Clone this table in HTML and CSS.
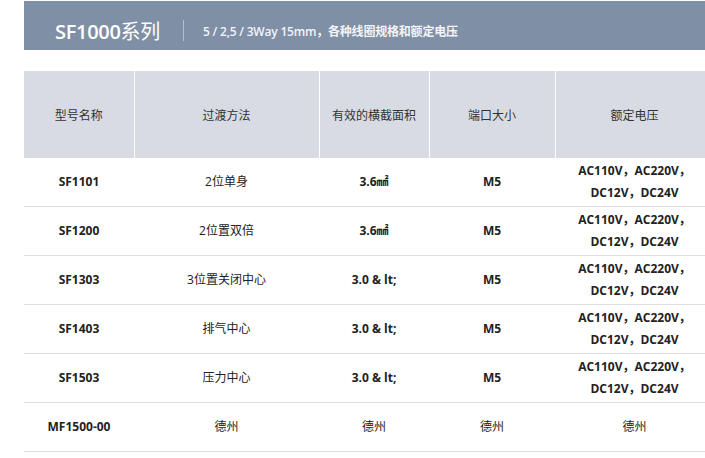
FILE: index.html
```html
<!DOCTYPE html>
<html lang="zh-CN">
<head>
<meta charset="utf-8">
<title>SF1000系列</title>
<link rel="stylesheet" href="styles.css">
</head>
<body>
<div class="page">
  <div class="banner">
    <h1 class="title"><b>SF1000</b>系列</h1>
    <span class="sep"></span>
    <p class="subtitle">5 / 2,5 / 3Way 15mm，各种线圈规格和额定电压</p>
  </div>
  <table class="spec">
    <colgroup>
      <col class="c1"><col class="c2"><col class="c3"><col class="c4"><col class="c5">
    </colgroup>
    <thead>
      <tr><th>型号名称</th><th>过渡方法</th><th>有效的横截面积</th><th>端口大小</th><th>额定电压</th></tr>
    </thead>
    <tbody>
      <tr><td class="b">SF1101</td><td>2位单身</td><td class="b">3.6㎟</td><td class="b">M5</td><td class="b">AC110V，AC220V，<br>DC12V，DC24V</td></tr>
      <tr><td class="b">SF1200</td><td>2位置双倍</td><td class="b">3.6㎟</td><td class="b">M5</td><td class="b">AC110V，AC220V，<br>DC12V，DC24V</td></tr>
      <tr><td class="b">SF1303</td><td>3位置关闭中心</td><td class="b">3.0 &amp; lt;</td><td class="b">M5</td><td class="b">AC110V，AC220V，<br>DC12V，DC24V</td></tr>
      <tr><td class="b">SF1403</td><td>排气中心</td><td class="b">3.0 &amp; lt;</td><td class="b">M5</td><td class="b">AC110V，AC220V，<br>DC12V，DC24V</td></tr>
      <tr><td class="b">SF1503</td><td>压力中心</td><td class="b">3.0 &amp; lt;</td><td class="b">M5</td><td class="b">AC110V，AC220V，<br>DC12V，DC24V</td></tr>
      <tr><td class="b">MF1500-00</td><td>德州</td><td>德州</td><td>德州</td><td>德州</td></tr>
    </tbody>
  </table>
</div>
</body>
</html>
```
FILE: styles.css
```css
html, body {
  margin: 0;
  padding: 0;
  overflow: hidden;
  background: #fff;
}
body {
  font-family: "Open Sans", "Noto Sans CJK SC", sans-serif;
  color: #222;
}
.page {
  width: 690px;
  padding: 1px 0 0 24px;
}
.banner {
  box-sizing: border-box;
  height: 49px;
  background: #7f8fa6;
  display: flex;
  align-items: center;
  padding: 10px 0 0 31px;
  color: #fff;
}
.title {
  margin: 0;
  font-family: "Open Sans", "Noto Sans CJK SC", sans-serif;
  font-size: 20px;
  font-weight: 400;
  letter-spacing: -0.3px;
  line-height: 1;
  padding-top: 2px;
}
.title b {
  font-weight: 600;
}
.sep {
  width: 1px;
  height: 21px;
  background: #b5bfcc;
  margin: 0 19px 0 23px;
}
.subtitle {
  margin: 0;
  font-size: 12px;
  font-weight: 600;
  color: #f2f4f7;
  padding-top: 1px;
  letter-spacing: -0.2px;
}
.spec {
  margin-top: 21px;
  border-collapse: collapse;
  table-layout: fixed;
  width: 690px;
}
.c1 { width: 110px; }
.c2 { width: 185px; }
.c3 { width: 110px; }
.c4 { width: 126px; }
.c5 { width: 159px; }
.spec th {
  background: #d8dbe3;
  height: 87px;
  padding: 0;
  font-weight: 400;
  font-size: 12px;
  color: #333;
  border-left: 1px solid #fff;
  border-right: 1px solid #fff;
  text-align: center;
}
.spec th:first-child { border-left: 0; }
.spec td {
  height: 48px;
  padding: 0;
  text-align: center;
  font-size: 12px;
  line-height: 22px;
  border-bottom: 1px solid #dedfe3;
  color: #222;
}
.spec td.b {
  font-weight: 700;
}
```
